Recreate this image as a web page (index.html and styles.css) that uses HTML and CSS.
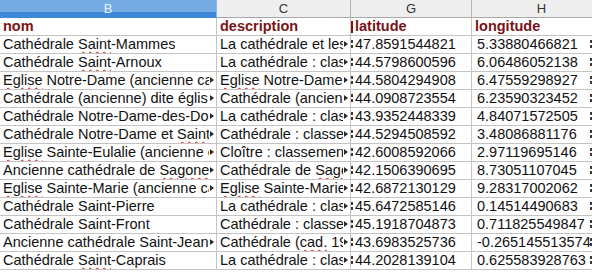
FILE: index.html
```html
<!DOCTYPE html>
<html lang="fr">
<head>
<meta charset="utf-8">
<title>Cathédrales</title>
<link rel="stylesheet" href="styles.css">
</head>
<body>
<div class="sheet">
  <div class="ch sel">B</div>
  <div class="ch">C</div>
  <div class="ch">G</div>
  <div class="ch">H</div>

  <div class="c hd"><span class="t">nom</span></div>
  <div class="c hd"><span class="t">description</span></div>
  <div class="c hd g"><span class="t">latitude</span></div>
  <div class="c hd"><span class="t">longitude</span></div>

  <div class="c"><span class="t">Cathédrale <u>Saint</u>-Mammes</span></div>
  <div class="c clip"><span class="t">La cathédrale et les bâtiments annexes</span></div>
  <div class="c g"><span class="t">47.8591544821</span></div>
  <div class="c h"><span class="t">5.33880466821</span></div>

  <div class="c"><span class="t">Cathédrale <u>Saint</u>-Arnoux</span></div>
  <div class="c clip"><span class="t">La cathédrale : classement par arrêté</span></div>
  <div class="c g"><span class="t">44.5798600596</span></div>
  <div class="c h"><span class="t">6.06486052138</span></div>

  <div class="c clip"><span class="t"><u>Eglise</u> Notre-Dame (ancienne cathédrale)</span></div>
  <div class="c clip"><span class="t"><u>Eglise</u> Notre-Dame : classement</span></div>
  <div class="c g"><span class="t">44.5804294908</span></div>
  <div class="c h"><span class="t">6.47559298927</span></div>

  <div class="c clip"><span class="t">Cathédrale (ancienne) dite églis</span></div>
  <div class="c clip"><span class="t">Cathédrale (ancienne) : classement</span></div>
  <div class="c g"><span class="t">44.0908723554</span></div>
  <div class="c h"><span class="t">6.23590323452</span></div>

  <div class="c clip"><span class="t">Cathédrale Notre-Dame-des-Doms</span></div>
  <div class="c clip"><span class="t">La cathédrale : classement par liste</span></div>
  <div class="c g"><span class="t">43.9352448339</span></div>
  <div class="c h"><span class="t">4.84071572505</span></div>

  <div class="c clip"><span class="t">Cathédrale Notre-Dame et <u>Saint</u>-Castor</span></div>
  <div class="c clip"><span class="t">Cathédrale : classement par liste</span></div>
  <div class="c g"><span class="t">44.5294508592</span></div>
  <div class="c h"><span class="t">3.48086881176</span></div>

  <div class="c clip"><span class="t"><u>Eglise</u> Sainte-Eulalie (ancienne cathédrale)</span></div>
  <div class="c clip"><span class="t">Cloître : classement par liste</span></div>
  <div class="c g"><span class="t">42.6008592066</span></div>
  <div class="c h"><span class="t">2.97119695146</span></div>

  <div class="c clip"><span class="t">Ancienne cathédrale de <u>Sagone</u></span></div>
  <div class="c clip"><span class="t">Cathédrale de <u>Sagone</u> : classement</span></div>
  <div class="c g"><span class="t">42.1506390695</span></div>
  <div class="c h"><span class="t">8.73051107045</span></div>

  <div class="c clip"><span class="t"><u>Eglise</u> Sainte-Marie (ancienne cathédrale)</span></div>
  <div class="c clip"><span class="t"><u>Eglise</u> Sainte-Marie : classement</span></div>
  <div class="c g"><span class="t">42.6872130129</span></div>
  <div class="c h"><span class="t">9.28317002062</span></div>

  <div class="c"><span class="t">Cathédrale Saint-Pierre</span></div>
  <div class="c clip"><span class="t">La cathédrale : classement par liste</span></div>
  <div class="c g"><span class="t">45.6472585146</span></div>
  <div class="c h"><span class="t">0.14514490683</span></div>

  <div class="c"><span class="t">Cathédrale Saint-Front</span></div>
  <div class="c clip"><span class="t">Cathédrale : classement par liste</span></div>
  <div class="c g"><span class="t">45.1918704873</span></div>
  <div class="c h"><span class="t">0.711825549847</span></div>

  <div class="c clip"><span class="t">Ancienne cathédrale Saint-Jean-Baptiste</span></div>
  <div class="c clip"><span class="t">Cathédrale (<u>cad.</u> 1983) : classement</span></div>
  <div class="c g"><span class="t">43.6983525736</span></div>
  <div class="c h"><span class="t">-0.265145513574</span></div>

  <div class="c"><span class="t">Cathédrale <u>Saint</u>-Caprais</span></div>
  <div class="c clip"><span class="t">La cathédrale : classement par liste</span></div>
  <div class="c g"><span class="t">44.2028139104</span></div>
  <div class="c h"><span class="t">0.625583928763</span></div>
</div>
</body>
</html>
```

FILE: styles.css
```css
html, body {
  margin: 0;
  padding: 0;
  background: #ffffff;
}
body {
  width: 592px;
  height: 272px;
  overflow: hidden;
  font-family: "Liberation Sans", Arial, sans-serif;
}
.sheet {
  display: grid;
  grid-template-columns: 217px 134px 121px 140px;
  grid-template-rows: 18px;
  grid-auto-rows: 18px;
  width: 612px;
}
.ch {
  box-sizing: border-box;
  background: #eeeeee;
  border-right: 1px solid #b4b4b4;
  border-bottom: 1px solid #a8a8a8;
  color: #333333;
  font-size: 13px;
  line-height: 17px;
  text-align: center;
}
.ch.sel {
  background: linear-gradient(to bottom, #74ace3 0, #74ace3 12px, #3d88d8 12px, #3d88d8 100%);
  color: #e4f0fb;
  border-right-color: #8fb7e0;
  border-bottom-color: #3d88d8;
}
.c {
  position: relative;
  box-sizing: border-box;
  border-right: 1px solid #c4c4c4;
  border-bottom: 1px solid #c4c4c4;
  font-size: 14.5px;
  line-height: 17px;
  color: #111111;
  padding-left: 3px;
  display: flex;
  min-width: 0;
  overflow: hidden;
}
.t {
  white-space: nowrap;
  overflow: hidden;
  min-width: 0;
}
.c.clip .t {
  margin-right: 7px;
}
.c.clip::after {
  content: "";
  position: absolute;
  right: 2px;
  top: 5px;
  border-left: 4px solid #2a2a2a;
  border-top: 3.5px solid transparent;
  border-bottom: 3.5px solid transparent;
}
.c.hd {
  color: #7a1216;
  font-weight: bold;
}
.c.g {
  padding-left: 4px;
}
.c.g::before {
  content: "";
  position: absolute;
  left: 0;
  top: 4px;
  width: 2px;
  height: 10px;
  background: repeating-linear-gradient(to bottom, #3a3a3a 0, #3a3a3a 3px, transparent 3px, transparent 5px);
}
.c.hd.g::before {
  background: #7a1216;
  top: 3px;
  height: 12px;
}
.c.h {
  padding-left: 5px;
  overflow: visible;
}
.c.h .t {
  overflow: visible;
}
.c.h::after {
  content: "";
  position: absolute;
  left: 118px;
  top: 4px;
  width: 2px;
  height: 10px;
  background: repeating-linear-gradient(to bottom, #3a3a3a 0, #3a3a3a 3px, transparent 3px, transparent 5px);
}
u {
  text-decoration: underline wavy #d42020;
  text-decoration-thickness: 1px;
  text-underline-offset: 2px;
}
```
